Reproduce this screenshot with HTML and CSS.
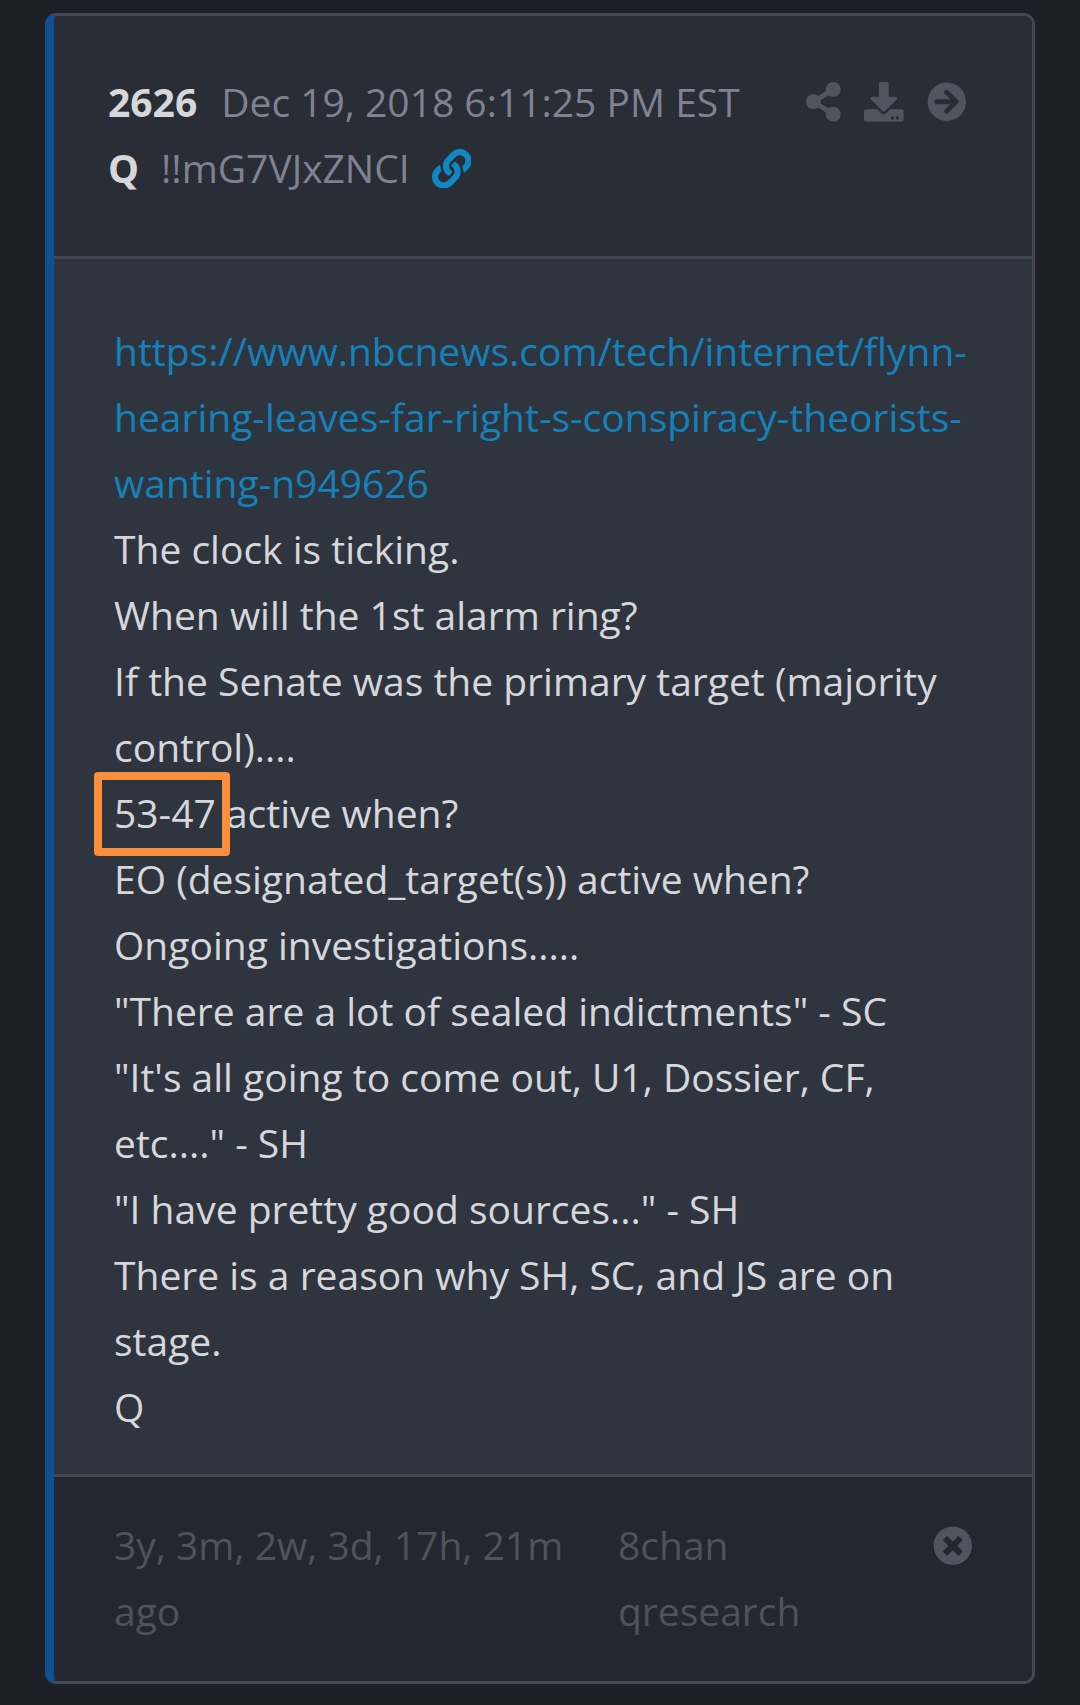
FILE: index.html
```html
<!DOCTYPE html>
<html lang="en">
<head>
<meta charset="utf-8">
<title>Post 2626</title>
<link rel="stylesheet" href="styles.css">
</head>
<body>
<article class="card">
  <header class="card-header">
    <div class="meta">
      <div class="meta-line"><strong class="strong">2626</strong><span class="date">Dec 19, 2018 6:11:25 PM EST</span></div>
      <div class="meta-line"><strong class="strong">Q</strong><span class="trip">!!mG7VJxZNCI</span><svg class="icon icon-link" viewBox="0 0 512 512"><path d="M326.612 185.391c59.747 59.809 58.927 155.698.36 214.59-.11.12-.24.25-.36.37l-67.2 67.2c-59.27 59.27-155.699 59.262-214.96 0-59.27-59.26-59.27-155.7 0-214.96l37.106-37.106c9.84-9.84 26.786-3.3 27.294 10.606.648 17.722 3.826 35.527 9.69 52.721 1.986 5.822.567 12.262-3.783 16.612l-13.087 13.087c-28.026 28.026-28.905 73.66-1.155 101.96 28.024 28.579 74.086 28.749 102.325.51l67.2-67.19c28.191-28.191 28.073-73.757 0-101.83-3.701-3.694-7.429-6.564-10.341-8.569a16.037 16.037 0 0 1-6.947-12.606c-.396-10.567 3.348-21.456 11.698-29.806l21.054-21.055c5.521-5.521 14.182-6.199 20.584-1.731a152.482 152.482 0 0 1 20.522 17.197zM467.547 44.449c-59.261-59.262-155.69-59.27-214.96 0l-67.2 67.2c-.12.12-.25.25-.36.37-58.566 58.892-59.387 154.781.36 214.59a152.454 152.454 0 0 0 20.521 17.196c6.402 4.468 15.064 3.789 20.584-1.731l21.054-21.055c8.35-8.35 12.094-19.239 11.698-29.806a16.037 16.037 0 0 0-6.947-12.606c-2.912-2.005-6.64-4.875-10.341-8.569-28.073-28.073-28.191-73.639 0-101.83l67.2-67.19c28.239-28.239 74.3-28.069 102.325.51 27.75 28.3 26.872 73.934-1.155 101.96l-13.087 13.087c-4.35 4.35-5.769 10.79-3.783 16.612 5.864 17.194 9.042 34.999 9.69 52.721.509 13.906 17.454 20.446 27.294 10.606l37.106-37.106c59.271-59.259 59.271-155.699.001-214.959z"/></svg></div>
    </div>
    <div class="actions">
      <svg class="icon icon-share" viewBox="0 0 448 512"><path d="M352 320c-22.608 0-43.387 7.819-59.79 20.895l-102.486-64.054a96.551 96.551 0 0 0 0-41.683l102.486-64.054C308.613 184.181 329.392 192 352 192c53.019 0 96-42.981 96-96S405.019 0 352 0s-96 42.981-96 96c0 7.158.79 14.13 2.276 20.841L155.79 180.895C139.387 167.819 118.608 160 96 160c-53.019 0-96 42.981-96 96s42.981 96 96 96c22.608 0 43.387-7.819 59.79-20.895l102.486 64.054A96.301 96.301 0 0 0 256 416c0 53.019 42.981 96 96 96s96-42.981 96-96-42.981-96-96-96z"/></svg>
      <svg class="icon" viewBox="0 0 512 512"><path d="M216 0h80c13.3 0 24 10.7 24 24v168h87.7c17.8 0 26.7 21.5 14.1 34.1L269.7 378.3c-7.5 7.5-19.8 7.5-27.3 0L90.1 226.1c-12.6-12.6-3.7-34.1 14.1-34.1H192V24c0-13.3 10.7-24 24-24zm296 376v112c0 13.3-10.7 24-24 24H24c-13.3 0-24-10.7-24-24V376c0-13.3 10.7-24 24-24h146.7l49 49c20.1 20.1 52.5 20.1 72.6 0l49-49H488c13.3 0 24 10.7 24 24zm-124 88c0-11-9-20-20-20s-20 9-20 20 9 20 20 20 20-9 20-20zm64 0c0-11-9-20-20-20s-20 9-20 20 9 20 20 20 20-9 20-20z"/></svg>
      <svg class="icon" viewBox="0 0 512 512"><path d="M256 8c137 0 248 111 248 248S393 504 256 504 8 393 8 256 119 8 256 8zm-28.9 143.6l75.5 72.4H120c-13.3 0-24 10.7-24 24v16c0 13.3 10.7 24 24 24h182.6l-75.5 72.4c-9.7 9.3-9.9 24.8-.4 34.3l11 10.9c9.4 9.4 24.6 9.4 33.9 0L404.3 273c9.4-9.4 9.4-24.6 0-33.9L271.6 106.3c-9.4-9.4-24.6-9.4-33.9 0l-11 10.9c-9.5 9.6-9.3 25.1.4 34.4z"/></svg>
    </div>
  </header>
  <section class="card-body">
    <p><a class="url">https://www.nbcnews.com/tech/internet/flynn-hearing-leaves-far-right-s-conspiracy-theorists-wanting-n949626</a></p>
    <p>The clock is ticking.</p>
    <p>When will the 1st alarm ring?</p>
    <p>If the Senate was the primary target (majority control)....</p>
    <p><span class="marked">53-47</span> active when?</p>
    <p>EO (designated_target(s)) active when?</p>
    <p>Ongoing investigations.....</p>
    <p>"There are a lot of sealed indictments" - SC</p>
    <p>"It's all going to come out, U1, Dossier, CF, etc...." - SH</p>
    <p>"I have pretty good sources..." - SH</p>
    <p>There is a reason why SH, SC, and JS are on stage.</p>
    <p>Q</p>
  </section>
  <footer class="card-footer">
    <div class="age">3y, 3m, 2w, 3d, 17h, 21m ago</div>
    <div class="board">8chan qresearch</div>
    <svg class="icon icon-close" viewBox="0 0 512 512"><path d="M256 8C119 8 8 119 8 256s111 248 248 248 248-111 248-248S393 8 256 8zm121.6 313.1c4.7 4.7 4.7 12.3 0 17L338 377.6c-4.7 4.7-12.3 4.7-17 0L256 312l-65.1 65.6c-4.7 4.7-12.3 4.7-17 0L134.4 338c-4.7-4.7-4.7-12.3 0-17l65.6-65-65.6-65.1c-4.7-4.7-4.7-12.3 0-17l39.6-39.6c4.7-4.7 12.3-4.7 17 0l65 65.7 65.1-65.6c4.7-4.7 12.3-4.7 17 0l39.6 39.6c4.7 4.7 4.7 12.3 0 17L312 256l65.6 65.1z"/></svg>
  </footer>
</article>
</body>
</html>
```
FILE: styles.css
```css
* { box-sizing: border-box; }

body {
  margin: 0;
  padding: 13px 45px 21px;
  height: 1705px;
  background: #1d2027;
  color: #d6d7da;
  font: 39px/66px "Open Sans", sans-serif;
}

.card {
  width: 990px;
  height: 1671px;
  display: flex;
  flex-direction: column;
  border: 3px solid #444852;
  border-left: 9px solid #124f90;
  border-radius: 11px;
  background: #2f353f;
  overflow: hidden;
}

.card-header {
  display: flex;
  justify-content: space-between;
  height: 243px;
  padding: 53px 65px 0 54px;
  border-bottom: 3px solid #444852;
  background: #292d35;
}

.meta-line { display: flex; align-items: center; height: 66px; white-space: nowrap; }
.strong { font-weight: 700; color: #d6d7da; }
.date { margin-left: 24px; color: #7f8290; }
.trip { margin-left: 22px; color: #7f8290; }

.icon { display: block; width: 39.6px; height: 39.6px; fill: #50545f; }
.icon-link { margin: 1px 0 0 22px; fill: #0f87c3; }
.icon-share { width: 34.65px; }

.actions { display: flex; gap: 23.6px; padding-top: 13px; }

.card-body { height: 1215px; padding: 59px 60px 0; }
.card-body p { margin: 0; }
.url { color: #1581b9; }

.marked { position: relative; }
.marked::after {
  content: "";
  position: absolute;
  box-sizing: border-box;
  left: -20px;
  top: -14px;
  width: 136px;
  height: 84px;
  border: 8px solid #f98f3d;
  border-radius: 4px;
}

.card-footer {
  flex: 1;
  display: flex;
  padding: 35px 59px 0 60px;
  border-top: 3px solid #444852;
  background: #24272f;
  color: #4f525b;
}
.age { width: 504px; padding-right: 50px; }
.board { width: 200px; }
.icon-close { margin: 13.5px 0 0 auto; }
```
